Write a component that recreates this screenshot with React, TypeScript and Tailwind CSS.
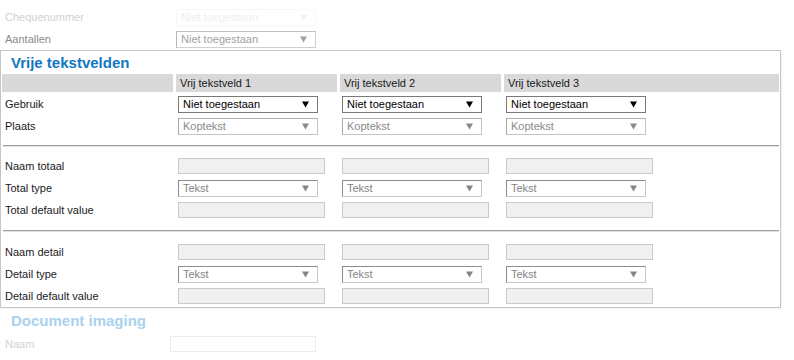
import React from "react";

type Variant = "enabled" | "disabled" | "inset" | "faded";

function Arrow({ color }: { color: string }) {
  return (
    <svg width="7" height="7" viewBox="0 0 7 7" className="shrink-0">
      <polygon points="0,0.5 7,0.5 3.5,6.5" fill={color} />
    </svg>
  );
}

function Select({ text, variant, w = "w-[140px]" }: { text: string; variant: Variant; w?: string }) {
  let cls = "";
  let arrow = "#000";
  if (variant === "enabled") {
    cls = "border-[#7a7a7a] text-black";
    arrow = "#000";
  } else if (variant === "disabled") {
    cls = "border-[#c4c4c4] border-l-[#a8a8a8] border-t-[#b0b0b0] text-[#8a8a8a]";
    arrow = "#8a8a8a";
  } else if (variant === "inset") {
    cls = "border-[#c8c8c8] border-l-[#8c8c8c] border-t-[#8c8c8c] text-[#858585]";
    arrow = "#858585";
  } else {
    cls = "border-[#e6e6e6] text-[#c8c8c8]";
    arrow = "#d0d0d0";
  }
  return (
    <div className={`${w} h-[17px] border ${cls} flex items-center justify-between pl-[4px] pr-[8px] bg-white`}>
      <span className="leading-none">{text}</span>
      <Arrow color={arrow} />
    </div>
  );
}

function Input() {
  return <div className="w-[147px] h-[16px] border border-[#c9c9c9] bg-[#f0f0f0]" />;
}

const gridCols = "grid grid-cols-[171px_161px_161px_275px] gap-x-[3px]";

function Row({ label, children }: { label: string; children: React.ReactNode[] }) {
  return (
    <div className={`${gridCols} h-[22px] items-center`}>
      <div className="pl-[3px] text-[#1a1a1a]">{label}</div>
      {children.map((c, i) => (
        <div key={i} className="pl-[2px]">
          {c}
        </div>
      ))}
    </div>
  );
}

function Divider({ h }: { h: string }) {
  return (
    <div className={`${h} flex items-center px-[1px]`}>
      <div className="w-full border-t border-[#a0a0a0] border-b border-b-[#e2e2e2]" />
    </div>
  );
}

export default function App() {
  return (
    <div className="w-[794px] h-[360px] bg-white overflow-hidden font-['Liberation_Sans',Arial,sans-serif] text-[11px] text-[#1a1a1a]">
      <div className="pt-[6px]">
        <div className="flex h-[22px] items-center opacity-30">
          <div className="w-[176px] pl-[5px] text-[#666]">Chequenummer</div>
          <Select text="Niet toegestaan" variant="faded" />
        </div>
        <div className="flex h-[22px] items-center">
          <div className="w-[176px] pl-[5px] text-[#8a8a8a]">Aantallen</div>
          <div className="opacity-80">
            <Select text="Niet toegestaan" variant="disabled" />
          </div>
        </div>
      </div>

      <div className="w-[781px] border border-[#c6c6c6] shadow-[1px_1px_2px_rgba(0,0,0,0.06)]">
        <div className="h-[23px] pt-[2px] pl-[10px]">
          <div className="text-[15px] leading-[20px] font-bold text-[#0f78c2]">Vrije tekstvelden</div>
        </div>
        <div className="pl-[1px]">
          <div className={`${gridCols} h-[18px]`}>
            <div className="bg-[#d9d9d9]" />
            <div className="bg-[#d9d9d9] pl-[4px] flex items-center">Vrij tekstveld 1</div>
            <div className="bg-[#d9d9d9] pl-[4px] flex items-center">Vrij tekstveld 2</div>
            <div className="bg-[#d9d9d9] pl-[4px] flex items-center">Vrij tekstveld 3</div>
          </div>
          <div className="h-[1px]" />
          <Row label="Gebruik">
            {[
              <Select key="a" text="Niet toegestaan" variant="enabled" />,
              <Select key="b" text="Niet toegestaan" variant="enabled" />,
              <Select key="c" text="Niet toegestaan" variant="enabled" />,
            ]}
          </Row>
          <Row label="Plaats">
            {[
              <Select key="a" text="Koptekst" variant="disabled" />,
              <Select key="b" text="Koptekst" variant="disabled" />,
              <Select key="c" text="Koptekst" variant="disabled" />,
            ]}
          </Row>
          <Divider h="h-[18px]" />
          <Row label="Naam totaal">{[<Input key="a" />, <Input key="b" />, <Input key="c" />]}</Row>
          <Row label="Total type">
            {[
              <Select key="a" text="Tekst" variant="inset" />,
              <Select key="b" text="Tekst" variant="inset" />,
              <Select key="c" text="Tekst" variant="inset" />,
            ]}
          </Row>
          <Row label="Total default value">{[<Input key="a" />, <Input key="b" />, <Input key="c" />]}</Row>
          <Divider h="h-[20px]" />
          <Row label="Naam detail">{[<Input key="a" />, <Input key="b" />, <Input key="c" />]}</Row>
          <Row label="Detail type">
            {[
              <Select key="a" text="Tekst" variant="inset" />,
              <Select key="b" text="Tekst" variant="inset" />,
              <Select key="c" text="Tekst" variant="inset" />,
            ]}
          </Row>
          <Row label="Detail default value">{[<Input key="a" />, <Input key="b" />, <Input key="c" />]}</Row>
        </div>
      </div>

      <div className="h-[25px] pt-[3px] pl-[11px]">
        <div className="text-[15px] leading-[20px] font-bold text-[#a9d2ee]">Document imaging</div>
      </div>
      <div className="flex h-[22px] items-center">
        <div className="w-[170px] pl-[5px] text-[#d2d2d2]">Naam</div>
        <div className="w-[146px] h-[16px] border border-[#ececec]" />
      </div>
    </div>
  );
}
